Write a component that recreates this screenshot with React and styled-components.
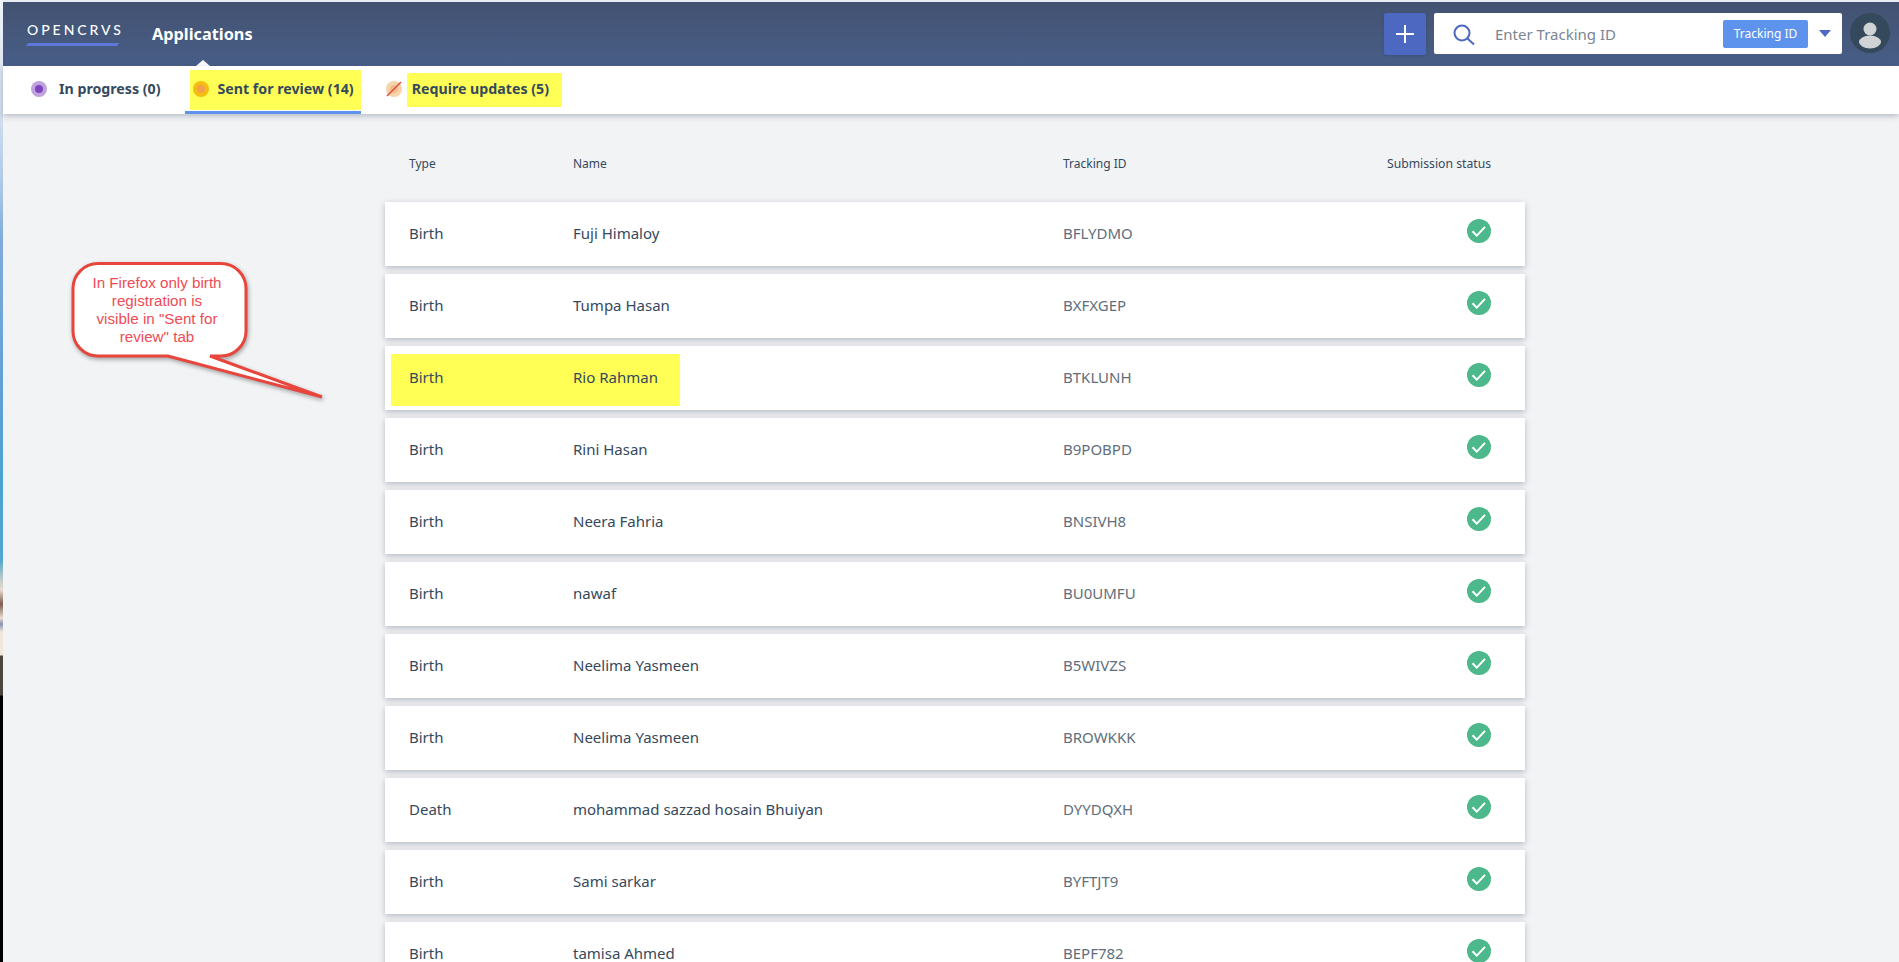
import React from 'react';
import styled, { createGlobalStyle } from 'styled-components';

const GlobalStyle = createGlobalStyle`
    html, body {
        margin: 0;
        padding: 0;
        overflow: hidden;
        background: #f2f3f5;
    }
    * {
        box-sizing: border-box;
    }
`;

const Page = styled.div`
    position: relative;
    display: flex;
    width: 1899px;
    height: 962px;
    overflow: hidden;
    font-family: 'Noto Sans', sans-serif;
    color: #35495d;
`;

// sliver of the desktop wallpaper left of the browser window
const Wallpaper = styled.div`
    flex: 0 0 3px;
    background: linear-gradient(
        to bottom,
        #f0f3f9 0,
        #d4e0f0 110px,
        #a9c6e6 190px,
        #7fabdb 240px,
        #6fa5d8 320px,
        #5fa0d4 400px,
        #4aa3d0 480px,
        #52a6cf 560px,
        #b9c9c6 578px,
        #e9dccf 590px,
        #7c5a52 604px,
        #e9dfd2 618px,
        #8c8fb5 624px,
        #f0e8da 632px,
        #f0e8da 655px,
        #4b473f 656px,
        #4b473f 695px,
        #000 696px
    );
`;

const Main = styled.div`
    flex: 1;
    min-width: 0;
    display: flex;
    flex-direction: column;
    background: #f2f3f5;
`;

const Header = styled.header`
    flex: 0 0 66px;
    display: flex;
    align-items: center;
    padding: 0 9px 0 24px;
    border-top: 2px solid #e9edf3;
    background: linear-gradient(to bottom, #435270, #485e88);
`;

const Logo = styled.div`
    display: flex;
    flex-direction: column;
    width: 94px;
    margin-right: 31px;
    margin-top: -2px;
`;

const LogoText = styled.span`
    font-family: Lato, sans-serif;
    font-size: 14px;
    line-height: 17px;
    font-weight: 500;
    letter-spacing: 2.95px;
    white-space: nowrap;
    color: #fff;
`;

const LogoBar = styled.span`
    display: block;
    width: 91px;
    height: 3px;
    margin-top: 5px;
    background: #5f77d9;
    transform: skewX(-40deg);
`;

const NavItem = styled.div`
    position: relative;
    align-self: stretch;
    display: flex;
    align-items: center;
    font-size: 16.3px;
    font-weight: 700;
    color: #fff;

    &::after {
        content: '';
        position: absolute;
        left: 44px;
        bottom: 0;
        border-left: 7px solid transparent;
        border-right: 7px solid transparent;
        border-bottom: 6px solid #fff;
    }
`;

const HeaderRight = styled.div`
    display: flex;
    align-items: flex-start;
    gap: 8px;
    margin-left: auto;
    align-self: flex-start;
    padding-top: 11px;
`;

const AddButton = styled.button`
    width: 42px;
    height: 42px;
    padding: 0;
    display: flex;
    align-items: center;
    justify-content: center;
    border: 0;
    border-radius: 2px;
    background: #4c68c1;
    box-shadow: 0 1px 3px rgba(40, 50, 80, 0.3);
`;

const SearchBox = styled.div`
    width: 408px;
    height: 41px;
    display: flex;
    align-items: center;
    padding-left: 17px;
    border-radius: 2px;
    background: #fff;
`;

const Placeholder = styled.span`
    margin-left: 20px;
    font-size: 15px;
    color: #7a8691;
`;

const SearchType = styled.span`
    display: flex;
    align-items: center;
    justify-content: center;
    width: 85px;
    height: 28px;
    margin-left: auto;
    border-radius: 2px;
    background: #5e93ed;
    font-size: 12px;
    color: #fff;
`;

const Caret = styled.span`
    width: 0;
    height: 0;
    margin: 0 11px 0 11px;
    border-left: 6px solid transparent;
    border-right: 6px solid transparent;
    border-top: 7px solid #4c68c1;
`;

const Subnav = styled.nav`
    position: relative;
    flex: 0 0 48px;
    display: flex;
    gap: 25px;
    padding-left: 28px;
    background: #fff;
    box-shadow: 0 2px 6px rgba(53, 67, 93, 0.32);
`;

const Tab = styled.div`
    position: relative;
    display: flex;
    align-items: center;
    gap: ${(p) => p.$gap || 12}px;
    padding-left: ${(p) => (p.$active ? 5 : 0)}px;

    ${(p) =>
        p.$active &&
        `&::after {
            content: '';
            position: absolute;
            left: 0;
            right: 0;
            bottom: 0;
            height: 3px;
            background: #5e93ed;
        }`}
`;

const Marker = styled.span`
    display: flex;
    align-items: center;
    gap: 8px;
    height: ${(p) => p.$height}px;
    padding: 0 ${(p) => p.$right}px 2px ${(p) => p.$left}px;
    background: #ffff55;
`;

const TabLabel = styled.span`
    margin-bottom: ${(p) => (p.$lift ? 4 : 2)}px;
    font-size: 14.2px;
    font-weight: 700;
    white-space: nowrap;
    color: #35495d;
`;

const TabIcon = styled.svg`
    display: block;
    flex: none;
    width: 16px;
    height: 16px;
    margin-bottom: ${(p) => (p.$lift ? 2 : 0)}px;
`;

const Content = styled.main`
    padding: 40px 0 0 382px;
`;

const Columns = styled.div`
    position: relative;
    display: grid;
    grid-template-columns: 164px 490px 1fr 110px;
    align-items: center;
    width: 1140px;
    padding: 0 34px 0 24px;
`;

const TableHead = styled(Columns)`
    height: 20px;
    margin-bottom: 28px;
    font-size: 12px;
`;

const HeadCell = styled.span`
    margin-bottom: 2px;
    white-space: nowrap;
`;

const HeadStatus = styled(HeadCell)`
    justify-self: end;
    font-size: 12.2px;
`;

const Row = styled(Columns)`
    height: 64px;
    margin-bottom: 8px;
    background: #fff;
    box-shadow: 0 2px 6px rgba(53, 67, 93, 0.32);
    font-size: 15px;

    ${(p) =>
        p.$marked &&
        `&::before {
            content: '';
            position: absolute;
            left: 6px;
            top: 8px;
            width: 289px;
            height: 52px;
            background: #ffff55;
        }`}
`;

const Cell = styled.span`
    position: relative;
    grid-row: 1;
    margin-bottom: 2px;
    white-space: nowrap;
    color: ${(p) => (p.$muted ? '#5f6e7c' : '#35495d')};
`;

const StatusCell = styled.span`
    display: flex;
    justify-content: flex-end;
    margin-bottom: 6px;
`;

const Callout = styled.aside`
    position: absolute;
    left: 72px;
    top: 262px;
    width: 174px;
    padding-top: 12px;
    text-align: center;
    font-family: 'Liberation Sans', Arial, sans-serif;
    font-size: 15.2px;
    line-height: 18px;
    color: #ef4b55;
`;

const CalloutShape = styled.svg`
    position: absolute;
    left: -2px;
    top: -2px;
    width: 256px;
    height: 142px;
    overflow: visible;
    filter: drop-shadow(1px 2px 2px rgba(60, 60, 60, 0.45));
`;

const CalloutText = styled.div`
    position: relative;
    left: -2px;
`;

const rows = [
    ['Birth', 'Fuji Himaloy', 'BFLYDMO'],
    ['Birth', 'Tumpa Hasan', 'BXFXGEP'],
    ['Birth', 'Rio Rahman', 'BTKLUNH'],
    ['Birth', 'Rini Hasan', 'B9POBPD'],
    ['Birth', 'Neera Fahria', 'BNSIVH8'],
    ['Birth', 'nawaf', 'BU0UMFU'],
    ['Birth', 'Neelima Yasmeen', 'B5WIVZS'],
    ['Birth', 'Neelima Yasmeen', 'BROWKKK'],
    ['Death', 'mohammad sazzad hosain Bhuiyan', 'DYYDQXH'],
    ['Birth', 'Sami sarkar', 'BYFTJT9'],
    ['Birth', 'tamisa Ahmed', 'BEPF782'],
];

const Dot = ({ ring, core, lift }) => (
    <TabIcon viewBox="0 0 16 16" $lift={lift}>
        <circle cx="8" cy="8" r="8" fill={ring} />
        <circle cx="8" cy="8" r="4" fill={core} />
    </TabIcon>
);

const CheckIcon = () => (
    <svg width="24" height="24" viewBox="0 0 24 24">
        <circle cx="12" cy="12" r="12" fill="#4cb88c" />
        <path d="M5.5 12.3L9.8 16.6L18 7.9" fill="none" stroke="#fff" strokeWidth="2" />
    </svg>
);

const App = () => {
    return (
        <Page>
            <GlobalStyle />
            <Wallpaper />
            <Main>
                <Header>
                    <Logo>
                        <LogoText>OPENCRVS</LogoText>
                        <LogoBar />
                    </Logo>
                    <NavItem>Applications</NavItem>
                    <HeaderRight>
                        <AddButton>
                            <svg width="20" height="20" viewBox="0 0 20 20">
                                <path d="M10 1V19M1 10H19" stroke="#fff" strokeWidth="2" />
                            </svg>
                        </AddButton>
                        <SearchBox>
                            <svg width="24" height="24" viewBox="0 0 24 24" fill="none">
                                <circle cx="11" cy="11" r="7.5" stroke="#4c68c1" strokeWidth="2" />
                                <path d="M16.5 16.5L23 22.5" stroke="#4c68c1" strokeWidth="2" />
                            </svg>
                            <Placeholder>Enter Tracking ID</Placeholder>
                            <SearchType>Tracking ID</SearchType>
                            <Caret />
                        </SearchBox>
                        <svg width="40" height="40" viewBox="0 0 40 40">
                            <circle cx="20" cy="20" r="20" fill="#35495d" />
                            <circle cx="20" cy="16" r="6.5" fill="#cfd3d6" />
                            <ellipse cx="20" cy="29" rx="11" ry="6.5" fill="#cfd3d6" />
                        </svg>
                    </HeaderRight>
                </Header>
                <Subnav>
                    <Tab>
                        <Dot ring="#c0a2dd" core="#7d45bb" lift />
                        <TabLabel $lift>In progress (0)</TabLabel>
                    </Tab>
                    <Tab $active>
                        <Marker $height={40} $left={3} $right={7}>
                            <Dot ring="#f5bd10" core="#f29f4f" />
                            <TabLabel>Sent for review (14)</TabLabel>
                        </Marker>
                    </Tab>
                    <Tab $gap={5}>
                        <TabIcon viewBox="0 0 16 16" $lift>
                            <circle cx="8" cy="8" r="8" fill="#f5d3ab" />
                            <circle cx="8" cy="8" r="4" fill="#f2bd8c" />
                            <path d="M1 15L15 1" stroke="#dc4a3c" strokeWidth="1.5" />
                        </TabIcon>
                        <Marker $height={34} $left={5} $right={13}>
                            <TabLabel>Require updates (5)</TabLabel>
                        </Marker>
                    </Tab>
                </Subnav>
                <Content>
                    <TableHead>
                        <HeadCell>Type</HeadCell>
                        <HeadCell>Name</HeadCell>
                        <HeadCell>Tracking ID</HeadCell>
                        <HeadStatus>Submission status</HeadStatus>
                    </TableHead>
                    {rows.map((row) => (
                        <Row key={row[2]} $marked={row[2] === 'BTKLUNH'}>
                            <Cell>{row[0]}</Cell>
                            <Cell>{row[1]}</Cell>
                            <Cell $muted>{row[2]}</Cell>
                            <StatusCell>
                                <CheckIcon />
                            </StatusCell>
                        </Row>
                    ))}
                </Content>
            </Main>
            <Callout>
                <CalloutShape viewBox="0 0 256 142">
                    <path
                        d="M28 3.5H151a25 25 0 0 1 25 25V71a25 25 0 0 1 -25 25H140L252 137L98 96H28a25 25 0 0 1 -25 -25V28.5a25 25 0 0 1 25 -25Z"
                        fill="#fff"
                        stroke="#e8453c"
                        strokeWidth="3"
                    />
                </CalloutShape>
                <CalloutText>
                    In Firefox only birth
                    <br />
                    registration is
                    <br />
                    visible in "Sent for
                    <br />
                    review" tab
                </CalloutText>
            </Callout>
        </Page>
    );
};

export default App;
